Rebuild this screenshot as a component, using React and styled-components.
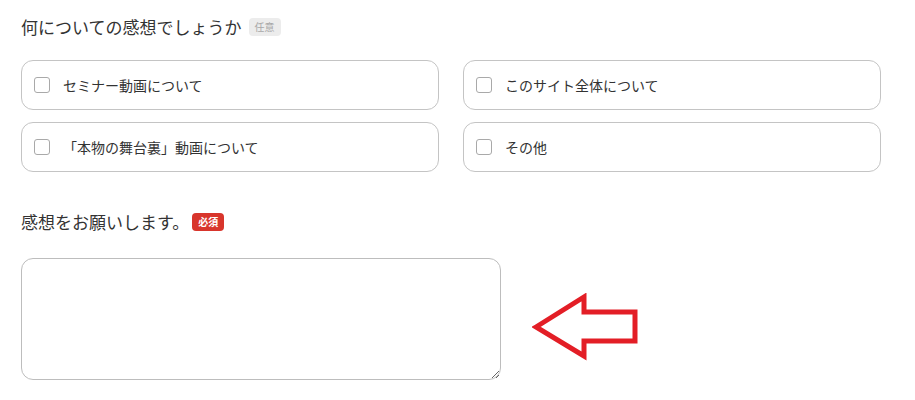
import React from "react";
import styled, { createGlobalStyle } from "styled-components";

const GlobalStyle = createGlobalStyle`
  body {
    margin: 0;
    background: #fff;
    font-family: "Noto Sans CJK JP", "Noto Sans", sans-serif;
    color: #333;
  }
`;

const options = [
  "セミナー動画について",
  "このサイト全体について",
  "「本物の舞台裏」動画について",
  "その他",
];

const Page = styled.div`
  width: 860px;
  padding: 14px 0 0 21px;
`;

const Field = styled.div`
  margin-bottom: ${(p) => p.gap || 0}px;
`;

const Label = styled.div`
  display: flex;
  align-items: center;
  gap: ${(p) => p.badgeGap || 7}px;
  font-size: 17px;
  line-height: 26px;
  margin-bottom: ${(p) => p.space}px;
`;

const Badge = styled.span`
  display: inline-flex;
  align-items: center;
  justify-content: center;
  height: 18px;
  padding: 0 6px;
  border-radius: 4px;
  font-size: 10px;
  line-height: 1;
  background: ${(p) => (p.required ? "#d8352c" : "#ececec")};
  color: ${(p) => (p.required ? "#fff" : "#a8a8a8")};
  font-weight: ${(p) => (p.required ? 700 : 400)};
`;

const Grid = styled.div`
  display: grid;
  grid-template-columns: 1fr 1fr;
  column-gap: 24px;
  row-gap: 12px;
`;

const Card = styled.label`
  display: flex;
  align-items: center;
  gap: 13px;
  height: 50px;
  box-sizing: border-box;
  padding: 0 12px;
  border: 1px solid #c4c4c4;
  border-radius: 12px;
  font-size: 14px;
  color: #333;
`;

const Box = styled.span`
  width: 16px;
  height: 16px;
  box-sizing: border-box;
  border: 1.5px solid #a9a9a9;
  border-radius: 3px;
  flex-shrink: 0;
`;

const Row = styled.div`
  display: flex;
  align-items: center;
`;

const TextArea = styled.textarea`
  width: 480px;
  height: 122px;
  box-sizing: border-box;
  border: 1px solid #bdbdbd;
  border-radius: 12px;
  resize: vertical;
  font-family: inherit;
  outline: none;
`;

const Arrow = styled.svg`
  margin-left: 31px;
  margin-top: 16px;
  flex-shrink: 0;
`;

export default function App() {
  return (
    <Page>
      <GlobalStyle />
      <Field gap={37}>
        <Label space={20}>
          何についての感想でしょうか
          <Badge>任意</Badge>
        </Label>
        <Grid>
          {options.map((o) => (
            <Card key={o}>
              <Box />
              {o}
            </Card>
          ))}
        </Grid>
      </Field>
      <Field>
        <Label space={23} badgeGap={3}>
          感想をお願いします。
          <Badge required>必須</Badge>
        </Label>
        <Row>
          <TextArea />
          <Arrow width="110" height="68" viewBox="0 0 110 68">
            <polygon
              points="4,34 52,4 52,19 103,19 103,48 52,48 52,63"
              fill="none"
              stroke="#e31e26"
              strokeWidth="5"
              strokeLinejoin="miter"
            />
          </Arrow>
        </Row>
      </Field>
    </Page>
  );
}
